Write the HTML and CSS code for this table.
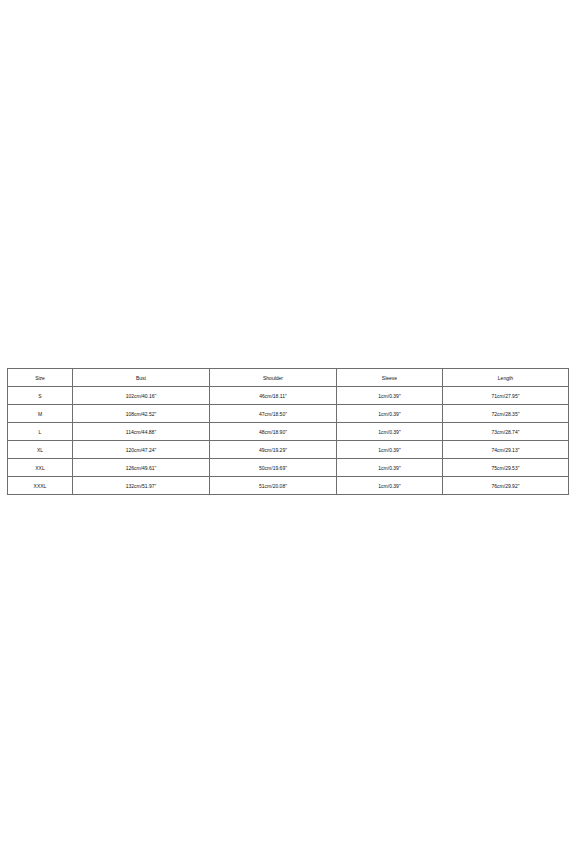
FILE: index.html
```html
<!DOCTYPE html>
<html>
<head>
<meta charset="utf-8">
<link rel="stylesheet" href="styles.css">
</head>
<body>
<div class="page">
  <div class="chart">
    <div class="cell">Size</div><div class="cell">Bust</div><div class="cell">Shoulder</div><div class="cell">Sleeve</div><div class="cell">Length</div>
    <div class="cell">S</div><div class="cell">102cm/40.16"</div><div class="cell">46cm/18.11"</div><div class="cell">1cm/0.39"</div><div class="cell">71cm/27.95"</div>
    <div class="cell">M</div><div class="cell">108cm/42.52"</div><div class="cell">47cm/18.50"</div><div class="cell">1cm/0.39"</div><div class="cell">72cm/28.35"</div>
    <div class="cell">L</div><div class="cell">114cm/44.88"</div><div class="cell">48cm/18.90"</div><div class="cell">1cm/0.39"</div><div class="cell">73cm/28.74"</div>
    <div class="cell">XL</div><div class="cell">120cm/47.24"</div><div class="cell">49cm/19.29"</div><div class="cell">1cm/0.39"</div><div class="cell">74cm/29.13"</div>
    <div class="cell">XXL</div><div class="cell">126cm/49.61"</div><div class="cell">50cm/19.69"</div><div class="cell">1cm/0.39"</div><div class="cell">75cm/29.53"</div>
    <div class="cell">XXXL</div><div class="cell">132cm/51.97"</div><div class="cell">51cm/20.08"</div><div class="cell">1cm/0.39"</div><div class="cell">76cm/29.92"</div>
  </div>
</div>
</body>
</html>
```
FILE: styles.css
```css
html, body {
  margin: 0;
  padding: 0;
  background: #ffffff;
}
.page {
  width: 576px;
  height: 864px;
  padding: 368px 0 0 7px;
  box-sizing: border-box;
}
.chart {
  display: grid;
  grid-template-columns: 64px 136px 126px 105px 125px;
  grid-auto-rows: 17px;
  gap: 1px;
  padding: 1px;
  background: #6e6e6e;
  width: max-content;
  font-family: "Liberation Sans", Arial, sans-serif;
  font-size: 5px;
  color: #111111;
}
.cell {
  background: #ffffff;
  display: flex;
  align-items: center;
  justify-content: center;
  white-space: nowrap;
}
```
